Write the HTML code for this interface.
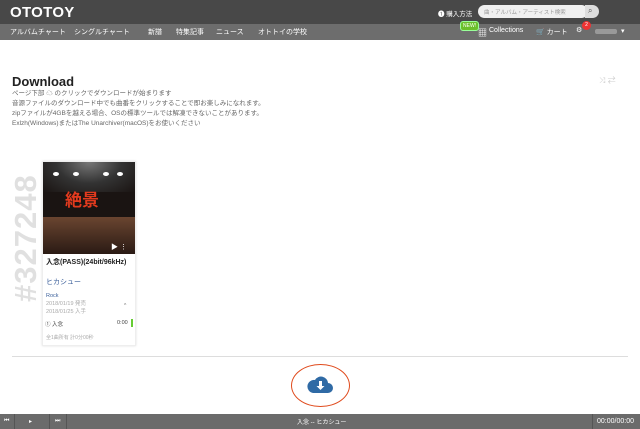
<!DOCTYPE html>
<html><head><meta charset="utf-8">
<style>
*{margin:0;padding:0;box-sizing:border-box}
body{width:640px;height:429px;overflow:hidden;background:#fff;font-family:"Liberation Sans","Noto Sans CJK JP",sans-serif;position:relative;color:#333}
.top{position:absolute;left:0;top:0;width:640px;height:24px;background:#484848}
.logo{position:absolute;left:10px;top:4px;color:#fff;font-weight:bold;font-size:15px;letter-spacing:0.3px}
.nav{position:absolute;left:0;top:24px;width:640px;height:16px;background:#6d6d6d;color:#fff;font-size:7px}
.nav span{position:absolute;top:3px;white-space:nowrap}
.search{position:absolute;left:478px;top:5px;width:110px;height:13px;background:#f0f0f0;border-radius:7px;font-size:5.5px;color:#999;padding:3px 0 0 6px;white-space:nowrap}
.sbtn{position:absolute;left:585px;top:5px;width:14px;height:13px;background:#ddd;border-radius:0 7px 7px 0}
.abs{position:absolute}
.small{font-size:6.5px;color:#666;line-height:10px}
.bottom{position:absolute;left:0;top:414px;width:640px;height:15px;background:#6b6b6b;color:#fff;font-size:6px}
</style></head><body>
<div class="top">
<div class="logo">OTOTOY</div>
<div class="abs" style="left:438px;top:8px;color:#fff;font-size:6.5px">❶ 購入方法</div>
<div class="search">曲・アルバム・アーティスト検索</div>
<div class="sbtn"><span style="position:absolute;left:3px;top:1px;font-size:8px;color:#555">⌕</span></div>
</div>
<div class="nav">
<span style="left:10px">アルバムチャート</span>
<span style="left:74px">シングルチャート</span>
<span style="left:148px">新譜</span>
<span style="left:176px">特集記事</span>
<span style="left:216px">ニュース</span>
<span style="left:258px">オトトイの学校</span>
<span style="left:460px;top:-3px;background:#6cbf2a;border-radius:3px;font-size:5px;padding:1px 2px;border:1px solid #9f9">NEW!</span>
<span style="left:478px;top:2px;font-size:9px">▦</span>
<span style="left:489px">Collections</span>
<span style="left:536px">🛒 カート</span>
<span style="left:576px;top:2px">⚙</span>
<span style="left:582px;top:-3px;width:9px;height:9px;border-radius:50%;background:#e33;font-size:5px;text-align:center;line-height:9px">2</span>
<span style="left:595px;top:5px;width:22px;height:5px;background:#999;border-radius:2px"></span>
<span style="left:621px">▾</span>
</div>

<div class="abs" style="left:12px;top:74px;font-size:13px;font-weight:bold;color:#222">Download</div>
<div class="abs small" style="left:12px;top:89px">ページ下部 <span style="color:#555">☁</span> のクリックでダウンロードが始まります<br>音源ファイルのダウンロード中でも曲番をクリックすることで即お楽しみになれます。<br>zipファイルが4GBを越える場合、OSの標準ツールでは解凍できないことがあります。<br>Exlzh(Windows)またはThe Unarchiver(macOS)をお使いください</div>
<div class="abs" style="left:599px;top:75px;font-size:8px;color:#ccc">⤨ ⇄</div>

<div class="abs" style="left:8px;top:302px;transform:rotate(-90deg);transform-origin:0 0;font-size:31px;font-weight:bold;color:#e0e0e0;letter-spacing:1px;width:150px">#327248</div>

<div class="abs" style="left:42px;top:161px;width:94px;height:185px;border:1px solid #eee;box-shadow:0 0 2px #ddd"></div>
<div class="abs" style="left:43px;top:162px;width:92px;height:92px;background:#1a1412;overflow:hidden">
<div class="abs" style="left:0;top:0;width:92px;height:30px;background:radial-gradient(ellipse at 50% 0,#777 0,#333 50%,#1a1412 100%)"></div>
<div class="abs" style="left:10px;top:10px;width:6px;height:4px;background:#fff;border-radius:50%;box-shadow:20px 0 #fff,50px 0 #fff,64px 0 #fff"></div>
<div class="abs" style="left:0;top:55px;width:92px;height:37px;background:linear-gradient(#6a4530,#2a1a14)"></div>
<div class="abs" style="left:22px;top:24px;color:#e23a1e;font-size:17px;font-weight:bold;font-family:'Noto Sans CJK JP',sans-serif">絶景</div>
<div class="abs" style="left:68px;top:80px;color:#fff;font-size:7px">▶ ⋮</div>
</div>
<div class="abs" style="left:46px;top:257px;font-size:7px;font-weight:bold;color:#222">入念(PASS)(24bit/96kHz)</div>
<div class="abs" style="left:46px;top:277px;font-size:7px;color:#3b5f9a">ヒカシュー</div>
<div class="abs" style="left:46px;top:293px;font-size:5.5px;color:#3b5f9a">Rock</div>
<div class="abs" style="left:46px;top:300px;font-size:5.5px;color:#aaa;line-height:8px">2018/01/19 発売<br>2018/01/25 入手</div>
<div class="abs" style="left:124px;top:304px;font-size:7px;color:#333">ˆ</div>
<div class="abs" style="left:45px;top:320px;font-size:5.5px;color:#444">① 入念</div>
<div class="abs" style="left:117px;top:320px;font-size:5.5px;color:#444">0:00</div>
<div class="abs" style="left:131px;top:319px;width:2px;height:8px;background:#6c3"></div>
<div class="abs" style="left:46px;top:334px;font-size:5px;color:#aaa">全1曲所有 計0分00秒</div>

<div class="abs" style="left:12px;top:356px;width:616px;height:1px;background:#ddd"></div>

<div class="abs" style="left:291px;top:364px;width:59px;height:43px;border:1.5px solid #e04a1c;border-radius:50%"></div>
<svg class="abs" style="left:307px;top:374px" width="26" height="20" viewBox="0 0 26 20">
<path d="M6 19 H21 A5 5 0 0 0 21 9 A7 7 0 0 0 8 6 A6.5 6.5 0 0 0 6 19Z" fill="#2f6aa5"/>
<path d="M12 7 V12 H9.5 L13.5 16 L17.5 12 H15 V7Z" fill="#fff"/>
</svg>

<div class="bottom">
<span class="abs" style="left:4px;top:4px">⏮</span>
<span class="abs" style="left:14px;top:0;width:1px;height:15px;background:#555"></span>
<span class="abs" style="left:29px;top:4px">▸</span>
<span class="abs" style="left:49px;top:0;width:1px;height:15px;background:#555"></span>
<span class="abs" style="left:55px;top:4px">⏭</span>
<span class="abs" style="left:66px;top:0;width:1px;height:15px;background:#555"></span>
<span class="abs" style="left:297px;top:3px">入念 -- ヒカシュー</span>
<span class="abs" style="left:592px;top:0;width:1px;height:15px;background:#555"></span>
<span class="abs" style="left:597px;top:4px;font-size:7px">00:00/00:00</span>
</div>
</body></html>
